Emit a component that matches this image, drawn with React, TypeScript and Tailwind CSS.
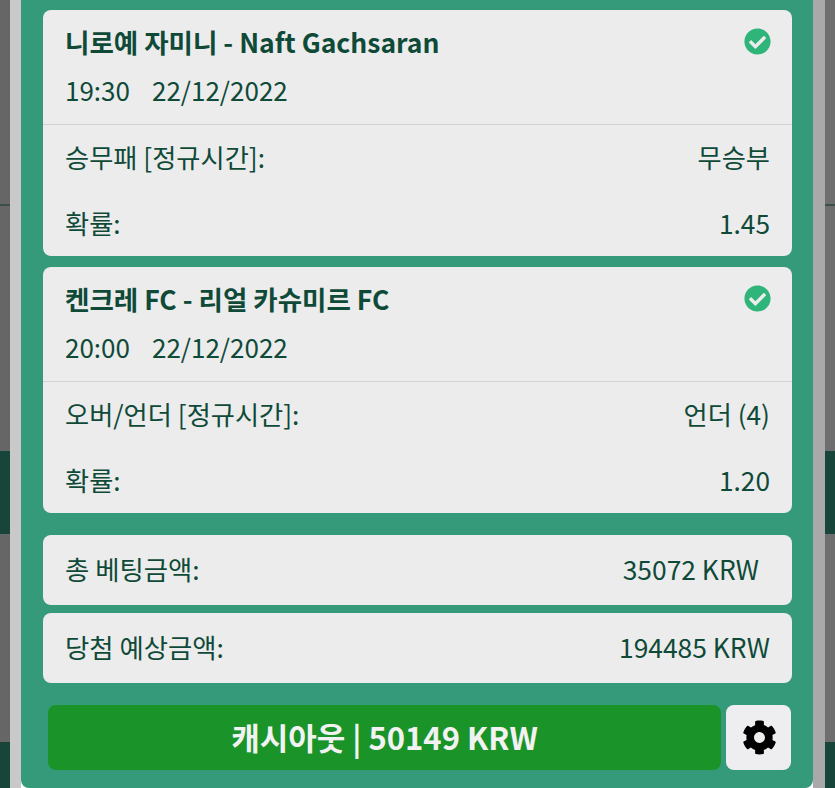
import { FaCheckCircle, FaCog } from "react-icons/fa";

const SANS = "font-['Noto_Sans_CJK_KR','Noto_Sans',sans-serif]";

type Bet = {
  title: string;
  time: string;
  date: string;
  market: string;
  pick: string;
  odds: string;
};

const bets: Bet[] = [
  {
    title: "니로예 자미니 - Naft Gachsaran",
    time: "19:30",
    date: "22/12/2022",
    market: "승무패 [정규시간]:",
    pick: "무승부",
    odds: "1.45",
  },
  {
    title: "켄크레 FC - 리얼 카슈미르 FC",
    time: "20:00",
    date: "22/12/2022",
    market: "오버/언더 [정규시간]:",
    pick: "언더 (4)",
    odds: "1.20",
  },
];

// the page behind the dialog, only its edges show
const Gutter = ({ className }: { className: string }) => (
  <div className={`flex h-[788px] w-[10px] shrink-0 flex-col ${className}`}>
    <div className="h-[204px] shrink-0" />
    <div className="h-[2px] shrink-0 bg-[#3d4f49]" />
    <div className="h-[245px] shrink-0" />
    <div className="h-[83px] shrink-0 bg-[#17453a]" />
    <div className="h-[208px] shrink-0" />
    <div className="flex-1 bg-[#17453a]" />
  </div>
);

const BetCard = ({ bet }: { bet: Bet }) => (
  <div className="rounded-lg bg-[#ececec] text-[26.25px] text-[#0f4a38]">
    <div className="h-[115px] border-b border-[#d2d2d2] pl-[22px] pr-[21px] pt-[14px]">
      <div className="flex items-start justify-between">
        <p className="text-[26.5px] font-bold leading-9">{bet.title}</p>
        <FaCheckCircle className="mt-[4px] h-[27px] w-[27px] shrink-0 text-[#2fb57a]" />
      </div>
      <p className="mt-[12px] flex gap-[22px] text-[26px] leading-9">
        <span>{bet.time}</span>
        <span>{bet.date}</span>
      </p>
    </div>
    <div className="flex h-[66px] items-center justify-between pl-[22px] pr-[22px]">
      <span>{bet.market}</span>
      <span>{bet.pick}</span>
    </div>
    <div className="flex h-[65px] items-center justify-between pl-[22px] pr-[22px]">
      <span>확률:</span>
      <span>{bet.odds}</span>
    </div>
  </div>
);

const TotalRow = ({ label, value, inset }: { label: string; value: string; inset?: boolean }) => (
  <div
    className={`flex h-[70px] items-center justify-between rounded-lg bg-[#ececec] pb-[3px] pl-[22px] text-[26.4px] text-[#0f4a38] ${
      inset ? "pr-[33px]" : "pr-[22px]"
    }`}
  >
    <span>{label}</span>
    <span>{value}</span>
  </div>
);

export default function App() {
  return (
    <div className={`${SANS} flex h-[788px] w-[835px] overflow-hidden`}>
      <Gutter className="bg-[#666666]" />
      <div className="h-[788px] w-[11px] shrink-0 bg-[#c9c9c9]" />
      <div className="flex h-[788px] w-[792px] shrink-0 flex-col rounded-b-lg bg-[#349a79] pl-[22px] pr-[21px] pt-[10px]">
        <div className="flex flex-col gap-[11px]">
          {bets.map((bet) => (
            <BetCard key={bet.title} bet={bet} />
          ))}
        </div>
        <div className="mt-[22px] flex flex-col gap-[8px]">
          <TotalRow label="총 베팅금액:" value="35072 KRW" inset />
          <TotalRow label="당첨 예상금액:" value="194485 KRW" />
        </div>
        <div className="mt-[22px] flex items-center gap-[5px] pl-[5px]">
          <button className="h-[65px] w-[673px] rounded-lg bg-[#1a9428] text-[31px] font-bold text-[#f2f2f2]">
            캐시아웃 | 50149 KRW
          </button>
          <button className="flex h-[65px] w-[65px] items-center justify-center rounded-lg bg-[#eeeef0]">
            <FaCog className="ml-[2px] h-[35px] w-[35px] text-black" />
          </button>
        </div>
      </div>
      <div className="h-[788px] w-[12px] shrink-0 bg-[#a9a9a9]" />
      <Gutter className="bg-[#6e6e6e]" />
    </div>
  );
}
